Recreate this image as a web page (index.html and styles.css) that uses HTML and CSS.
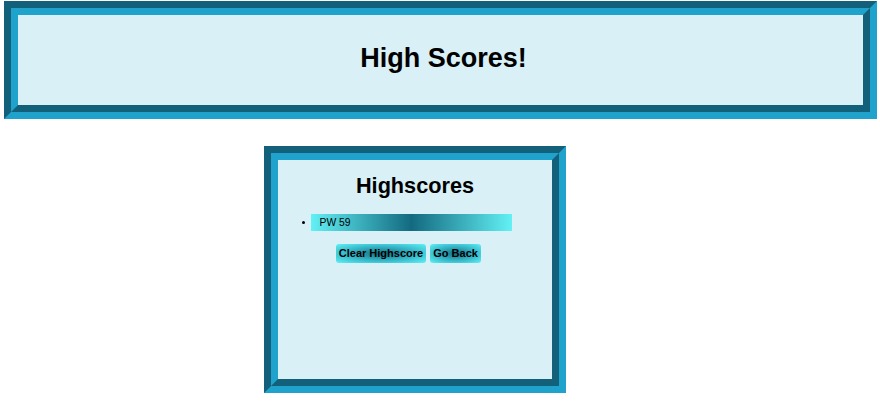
FILE: index.html
```html
<!DOCTYPE html>
<html>
<head>
<meta charset="utf-8">
<title>High Scores</title>
<link rel="stylesheet" href="styles.css">
</head>
<body>
<header class="banner">
  <h1 class="banner-title">High Scores!</h1>
</header>
<main class="card">
  <h2 class="card-title">Highscores</h2>
  <ul class="score-list">
    <li class="score-item">PW 59</li>
  </ul>
  <div class="actions">
    <button class="btn btn-clear" type="button">Clear Highscore</button>
    <button class="btn btn-back" type="button">Go Back</button>
  </div>
</main>
</body>
</html>
```
FILE: styles.css
```css
html, body {
  margin: 0;
  padding: 0;
  background: #ffffff;
  font-family: "Liberation Sans", Arial, sans-serif;
  color: #000;
}

.banner {
  margin: 1px 3px 0 4px;
  border: 14px groove #1fa3cd;
  background: #d8f0f6;
  height: 90px;
  box-sizing: content-box;
}

.banner-title {
  margin: 0;
  padding-top: 30px;
  padding-left: 6px;
  font-size: 27px;
  line-height: 27px;
  font-weight: bold;
  text-align: center;
}

.card {
  display: block;
  margin: 27px 0 0 264px;
  width: 274px;
  height: 219px;
  border: 14px groove #1fa3cd;
  background: #d8f0f6;
}

.card-title {
  margin: 0;
  padding-top: 15px;
  font-size: 21.7px;
  line-height: 21.6px;
  font-weight: bold;
  text-align: center;
}

.score-list {
  margin: 17px 0 0 0;
  padding: 0 0 0 33px;
  font-size: 10.3px;
  list-style: none;
}

.score-item {
  position: relative;
  width: 201px;
  height: 17px;
  line-height: 17px;
  padding-left: 8.6px;
  box-sizing: border-box;
  background: linear-gradient(to right, #62f1f5 0%, #136a80 50%, #62f1f5 100%);
}

.score-item::before {
  content: "";
  position: absolute;
  left: -9px;
  top: 7px;
  width: 3px;
  height: 3px;
  border-radius: 50%;
  background: #000;
}

.actions {
  display: flex;
  gap: 4.5px;
  margin: 13px 0 0 58px;
}

.btn {
  height: 19px;
  padding: 0 2.8px;
  border: none;
  border-radius: 3px;
  font-family: "Liberation Sans", Arial, sans-serif;
  font-size: 11px;
  font-weight: bold;
  color: #000;
  background: radial-gradient(ellipse at center, #147086 0%, #3cc3d3 62%, #62f1f5 100%);
}
```
